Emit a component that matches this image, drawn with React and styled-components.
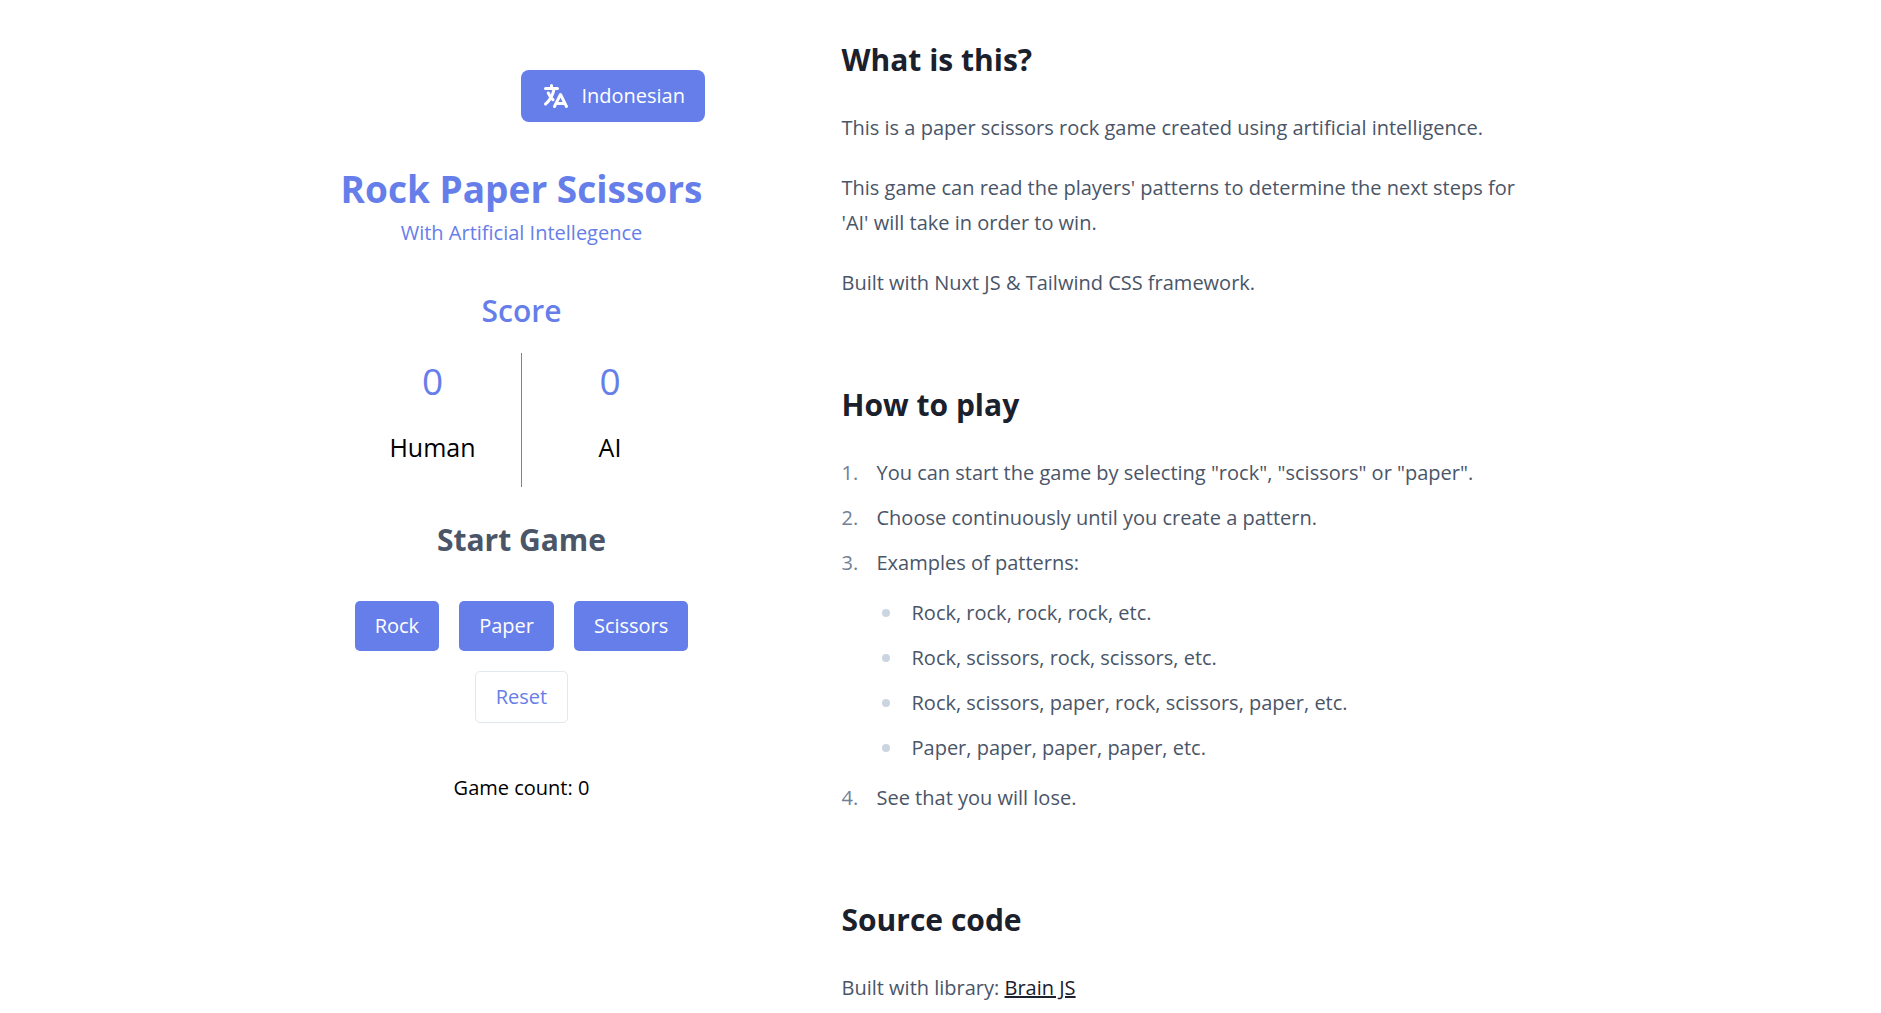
import React, { useState } from "react";
import styled, { createGlobalStyle } from "styled-components";
import { HiTranslate } from "react-icons/hi";

const GlobalStyle = createGlobalStyle`
  *, *::before, *::after { box-sizing: border-box; }
  body {
    margin: 0;
    background: #fff;
    color: #000;
    font: 400 20px/30px "Open Sans", "Noto Sans", sans-serif;
  }
  h1, h2, p { margin: 0; }
  button { font: inherit; cursor: pointer; }
`;

const Page = styled.div`
  display: flex;
  align-items: flex-start;
  gap: 100px;
  max-width: 1278px;
  margin: 0 auto;

  @media (max-width: 1000px) {
    flex-direction: column;
    align-items: center;
    gap: 20px;
    padding: 0 20px;
  }
`;

const Game = styled.main`
  display: flex;
  flex-direction: column;
  align-items: center;
  flex: 0 0 440px;
  padding: 70px 0 40px;
  text-align: center;
`;

const Header = styled.header`
  display: flex;
  flex-direction: column;
  min-width: 367px;
`;

const Button = styled.button`
  padding: 10px 20px;
  border: ${(p) => (p.$outline ? "1px solid #e2e8f0" : "0")};
  border-radius: 5px;
  background: ${(p) => (p.$outline ? "#fff" : "#667eea")};
  color: ${(p) => (p.$outline ? "#667eea" : "#fff")};
`;

const LanguageButton = styled(Button)`
  display: flex;
  align-items: center;
  align-self: flex-end;
  gap: 10px;
  min-height: 52px;
  margin-bottom: 38px;
  border-radius: 8px;
`;

const Title = styled.h1`
  color: #667eea;
  font-size: 37px;
  font-weight: 700;
  line-height: 58px;
`;

const Subtitle = styled.p`
  color: #667eea;
`;

const ScoreTitle = styled.h2`
  margin: 40px 0 20px;
  color: #667eea;
  font-size: 30px;
  font-weight: 600;
  line-height: 45px;
`;

const Scores = styled.div`
  display: grid;
  grid-template-columns: 1fr 1fr;
  width: 354px;
`;

const Player = styled.div`
  display: flex;
  flex-direction: column;
  gap: 20px;
  padding-bottom: 22px;
  font-size: 25px;
  line-height: 36px;

  &:first-child { border-right: 1px solid #667eea; }
`;

const Points = styled.span`
  color: #667eea;
  font-size: 37px;
  line-height: 56px;
`;

const StartTitle = styled.h2`
  margin: 30px 0 39px;
  color: #4a5568;
  font-size: 30px;
  font-weight: 700;
  line-height: 45px;
`;

const Choices = styled.div`
  display: flex;
  gap: 20px;
  margin-bottom: 20px;
`;

const Count = styled.p`
  margin-top: 50px;
`;

const Article = styled.article`
  flex: 1;
  max-width: 690px;
  padding-bottom: 40px;
  color: #4a5568;
  line-height: 35px;
`;

const Section = styled.section`
  padding-top: 40px;
  & + & { padding-top: 85px; }

  h2 {
    margin-bottom: 30px;
    color: #1a202c;
    font-size: 30px;
    font-weight: 700;
    line-height: 40px;
  }
  p + p { margin-top: 25px; }
`;

const List = styled.ul`
  display: flex;
  flex-direction: column;
  gap: 10px;
  margin: 0;
  padding: 0;
  list-style: none;
`;

const Steps = styled(List).attrs({ as: "ol" })`
  counter-reset: step;
`;

const Step = styled.li`
  display: grid;
  grid-template-columns: 35px 1fr;
  counter-increment: step;

  &::before {
    content: counter(step) ".";
    color: #718096;
  }
`;

const Patterns = styled(List)`
  grid-column: 2;
  margin: 15px 0 5px;
`;

const Pattern = styled.li`
  display: grid;
  grid-template-columns: 30px 1fr;
  align-items: center;
  padding-left: 5px;

  &::before {
    content: "";
    width: 8px;
    height: 8px;
    border-radius: 50%;
    background: #cbd5e0;
  }
`;

const Link = styled.a`
  color: #1a202c;
  text-decoration: underline;
`;

const choices = ["Rock", "Paper", "Scissors"];
const patterns = [
  "Rock, rock, rock, rock, etc.",
  "Rock, scissors, rock, scissors, etc.",
  "Rock, scissors, paper, rock, scissors, paper, etc.",
  "Paper, paper, paper, paper, etc.",
];

export default function App() {
  const [score, setScore] = useState({ human: 0, ai: 0, games: 0 });

  const play = (pick) => {
    const ai = Math.floor(Math.random() * 3);
    const result = (pick - ai + 3) % 3;
    setScore((s) => ({
      human: s.human + (result === 1 ? 1 : 0),
      ai: s.ai + (result === 2 ? 1 : 0),
      games: s.games + 1,
    }));
  };

  return (
    <>
      <GlobalStyle />
      <Page>
        <Game>
          <Header>
            <LanguageButton type="button">
              <HiTranslate size={30} aria-hidden="true" />
              <span>Indonesian</span>
            </LanguageButton>
            <Title>Rock Paper Scissors</Title>
            <Subtitle>With Artificial Intellegence</Subtitle>
          </Header>
          <ScoreTitle>Score</ScoreTitle>
          <Scores>
            <Player>
              <Points>{score.human}</Points>
              <span>Human</span>
            </Player>
            <Player>
              <Points>{score.ai}</Points>
              <span>AI</span>
            </Player>
          </Scores>
          <StartTitle>Start Game</StartTitle>
          <Choices>
            {choices.map((name, i) => (
              <Button key={name} type="button" onClick={() => play(i)}>
                {name}
              </Button>
            ))}
          </Choices>
          <Button
            $outline
            type="button"
            onClick={() => setScore({ human: 0, ai: 0, games: 0 })}
          >
            Reset
          </Button>
          <Count>Game count: {score.games}</Count>
        </Game>
        <Article>
          <Section>
            <h2>What is this?</h2>
            <p>
              This is a paper scissors rock game created using artificial
              intelligence.
            </p>
            <p>
              This game can read the players' patterns to determine the next
              steps for 'AI' will take in order to win.
            </p>
            <p>Built with Nuxt JS &amp; Tailwind CSS framework.</p>
          </Section>
          <Section>
            <h2>How to play</h2>
            <Steps>
              <Step>
                You can start the game by selecting "rock", "scissors" or
                "paper".
              </Step>
              <Step>Choose continuously until you create a pattern.</Step>
              <Step>
                Examples of patterns:
                <Patterns>
                  {patterns.map((text) => (
                    <Pattern key={text}>{text}</Pattern>
                  ))}
                </Patterns>
              </Step>
              <Step>See that you will lose.</Step>
            </Steps>
          </Section>
          <Section>
            <h2>Source code</h2>
            <p>
              Built with library: <Link href="https://brain.js.org">Brain JS</Link>
            </p>
          </Section>
        </Article>
      </Page>
    </>
  );
}
